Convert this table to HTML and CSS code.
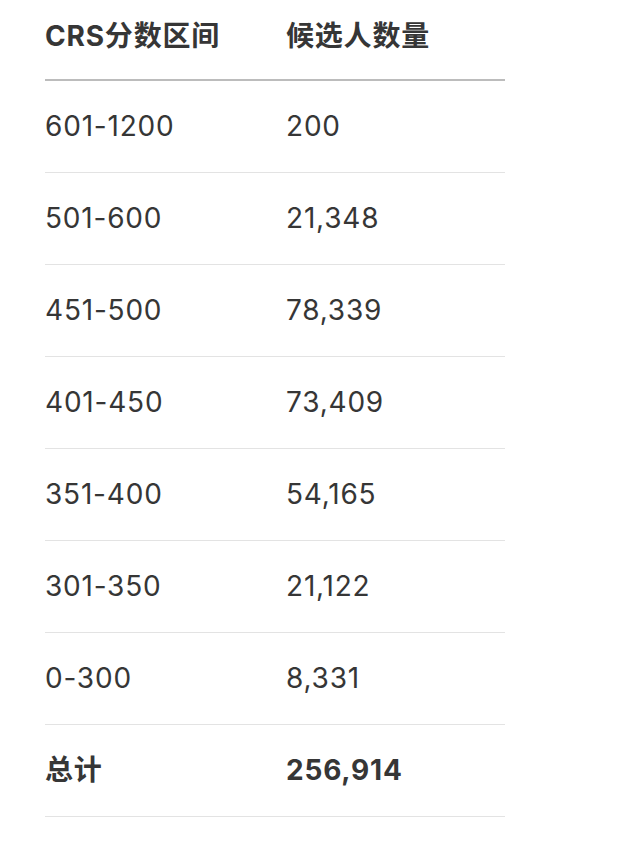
FILE: index.html
```html
<!DOCTYPE html>
<html lang="zh-CN">
<head>
<meta charset="utf-8">
<link rel="stylesheet" href="styles.css">
</head>
<body>
<div class="wrap">
<table class="crs">
<thead>
<tr><th class="c1">CRS分数区间</th><th>候选人数量</th></tr>
</thead>
<tbody>
<tr><td class="c1">601-1200</td><td>200</td></tr>
<tr><td class="c1">501-600</td><td>21,348</td></tr>
<tr><td class="c1">451-500</td><td>78,339</td></tr>
<tr><td class="c1">401-450</td><td>73,409</td></tr>
<tr><td class="c1">351-400</td><td>54,165</td></tr>
<tr><td class="c1">301-350</td><td>21,122</td></tr>
<tr><td class="c1">0-300</td><td>8,331</td></tr>
<tr class="total"><td class="c1">总计</td><td>256,914</td></tr>
</tbody>
</table>
</div>
</body>
</html>
```
FILE: styles.css
```css
html, body {
  margin: 0;
  padding: 0;
  background: #fff;
}
.wrap {
  padding-left: 45px;
}
.crs {
  width: 460px;
  border-collapse: collapse;
  font-family: Inter, "Noto Sans CJK SC", sans-serif;
  font-size: 28px;
  letter-spacing: 0.8px;
  color: #363636;
}
.crs th, .crs td {
  text-align: left;
  padding: 0;
}
.crs .c1 {
  width: 241px;
}
.crs th {
  font-weight: 700;
  line-height: 32px;
  padding-top: 20px;
  padding-bottom: 27px;
  border-bottom: 2px solid #bcbcbc;
}
.crs td {
  font-weight: 400;
  line-height: 31px;
  padding-top: 30px;
  padding-bottom: 30px;
  border-bottom: 1px solid #e3e3e3;
}
.crs .total td {
  font-weight: 700;
}
```
